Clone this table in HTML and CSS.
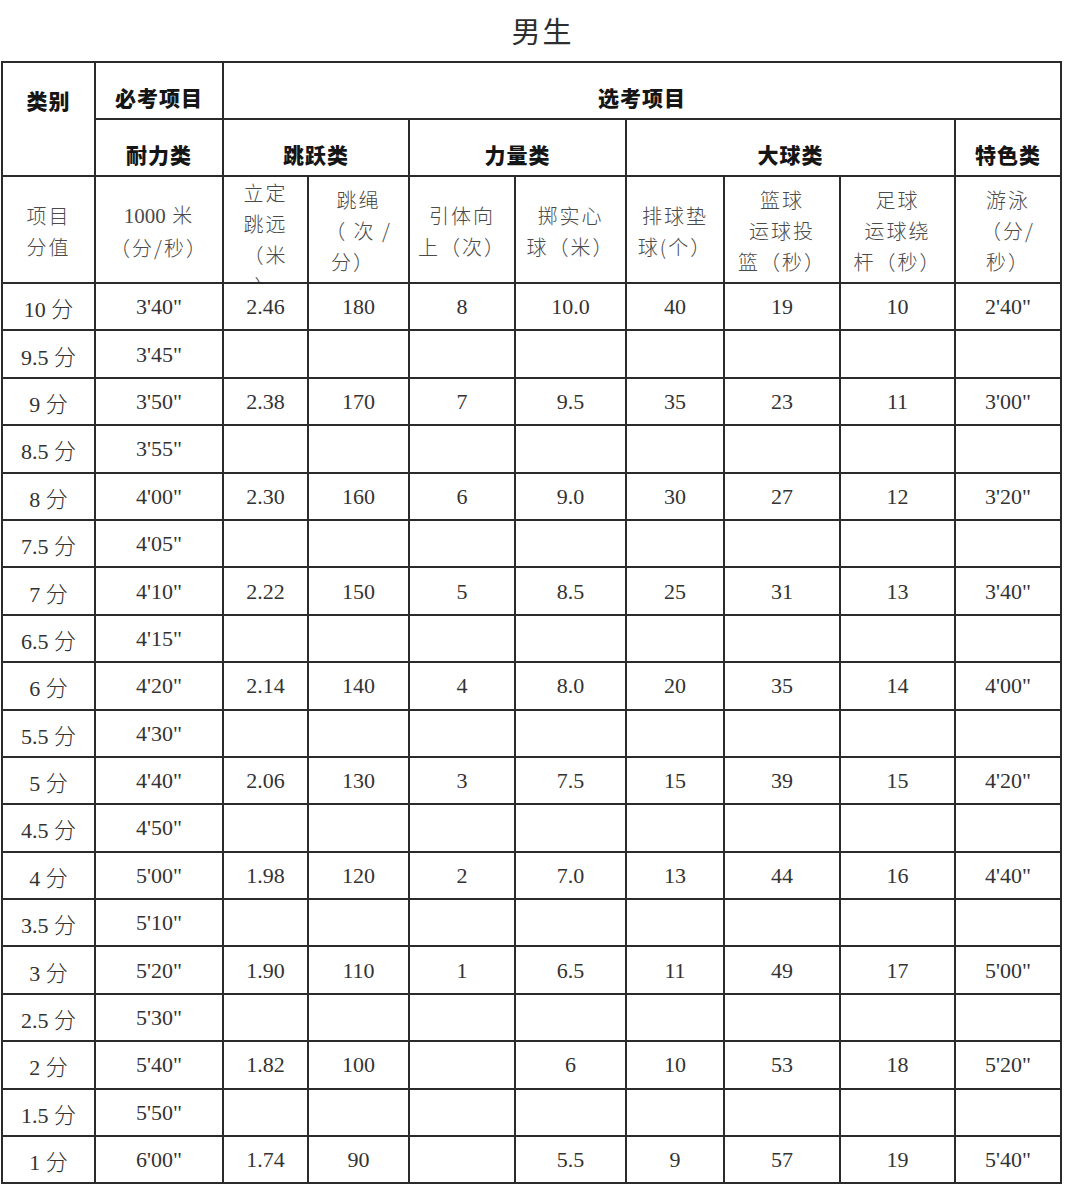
FILE: index.html
```html
<!DOCTYPE html>
<html lang="zh-CN">
<head>
<meta charset="utf-8">
<title>男生</title>
<link rel="stylesheet" href="styles.css">
</head>
<body>
<div class="title">男生</div>
<table class="score">
  <colgroup>
    <col class="w1"><col class="w2"><col class="w3"><col class="w4"><col class="w5">
    <col class="w6"><col class="w7"><col class="w8"><col class="w9"><col class="w10">
  </colgroup>
  <tr class="h1">
    <th rowspan="2" class="cat">类别</th>
    <th>必考项目</th>
    <th colspan="8">选考项目</th>
  </tr>
  <tr class="h2">
    <th>耐力类</th>
    <th colspan="2">跳跃类</th>
    <th colspan="2">力量类</th>
    <th colspan="3">大球类</th>
    <th>特色类</th>
  </tr>
  <tr class="h3">
    <td>项目<br>分值</td>
    <td><span class="num">1000</span> 米<br>（分/秒）</td>
    <td class="clip"><div class="clipbox">立定<br>跳远<br>（米<br>）</div></td>
    <td>跳绳<br>（&nbsp;次&nbsp;/<br><span class="lft">分）</span></td>
    <td>引体向<br>上（次）</td>
    <td>掷实心<br>球（米）</td>
    <td>排球垫<br>球(个）</td>
    <td>篮球<br>运球投<br>篮（秒）</td>
    <td>足球<br>运球绕<br>杆（秒）</td>
    <td>游泳<br>（分/<br>秒）</td>
  </tr>
  <tr><td>10 分</td><td>3'40"</td><td>2.46</td><td>180</td><td>8</td><td>10.0</td><td>40</td><td>19</td><td>10</td><td>2'40"</td></tr>
  <tr><td>9.5 分</td><td>3'45"</td><td></td><td></td><td></td><td></td><td></td><td></td><td></td><td></td></tr>
  <tr><td>9 分</td><td>3'50"</td><td>2.38</td><td>170</td><td>7</td><td>9.5</td><td>35</td><td>23</td><td>11</td><td>3'00"</td></tr>
  <tr><td>8.5 分</td><td>3'55"</td><td></td><td></td><td></td><td></td><td></td><td></td><td></td><td></td></tr>
  <tr><td>8 分</td><td>4'00"</td><td>2.30</td><td>160</td><td>6</td><td>9.0</td><td>30</td><td>27</td><td>12</td><td>3'20"</td></tr>
  <tr><td>7.5 分</td><td>4'05"</td><td></td><td></td><td></td><td></td><td></td><td></td><td></td><td></td></tr>
  <tr><td>7 分</td><td>4'10"</td><td>2.22</td><td>150</td><td>5</td><td>8.5</td><td>25</td><td>31</td><td>13</td><td>3'40"</td></tr>
  <tr><td>6.5 分</td><td>4'15"</td><td></td><td></td><td></td><td></td><td></td><td></td><td></td><td></td></tr>
  <tr><td>6 分</td><td>4'20"</td><td>2.14</td><td>140</td><td>4</td><td>8.0</td><td>20</td><td>35</td><td>14</td><td>4'00"</td></tr>
  <tr><td>5.5 分</td><td>4'30"</td><td></td><td></td><td></td><td></td><td></td><td></td><td></td><td></td></tr>
  <tr><td>5 分</td><td>4'40"</td><td>2.06</td><td>130</td><td>3</td><td>7.5</td><td>15</td><td>39</td><td>15</td><td>4'20"</td></tr>
  <tr><td>4.5 分</td><td>4'50"</td><td></td><td></td><td></td><td></td><td></td><td></td><td></td><td></td></tr>
  <tr><td>4 分</td><td>5'00"</td><td>1.98</td><td>120</td><td>2</td><td>7.0</td><td>13</td><td>44</td><td>16</td><td>4'40"</td></tr>
  <tr><td>3.5 分</td><td>5'10"</td><td></td><td></td><td></td><td></td><td></td><td></td><td></td><td></td></tr>
  <tr><td>3 分</td><td>5'20"</td><td>1.90</td><td>110</td><td>1</td><td>6.5</td><td>11</td><td>49</td><td>17</td><td>5'00"</td></tr>
  <tr><td>2.5 分</td><td>5'30"</td><td></td><td></td><td></td><td></td><td></td><td></td><td></td><td></td></tr>
  <tr><td>2 分</td><td>5'40"</td><td>1.82</td><td>100</td><td></td><td>6</td><td>10</td><td>53</td><td>18</td><td>5'20"</td></tr>
  <tr><td>1.5 分</td><td>5'50"</td><td></td><td></td><td></td><td></td><td></td><td></td><td></td><td></td></tr>
  <tr><td>1 分</td><td>6'00"</td><td>1.74</td><td>90</td><td></td><td>5.5</td><td>9</td><td>57</td><td>19</td><td>5'40"</td></tr>
</table>
</body>
</html>
```

FILE: styles.css
```css
html, body {
  margin: 0;
  padding: 0;
  background: #ffffff;
}

body {
  font-family: "Liberation Serif", "Noto Sans CJK SC", serif;
  color: #333333;
}

.title {
  height: 61px;
  box-sizing: border-box;
  padding-left: 20px;
  text-align: center;
  font-family: "Noto Sans CJK SC", sans-serif;
  font-weight: 400;
  font-size: 29px;
  line-height: 60px;
  letter-spacing: 2px;
  color: #2e2e2e;
}

.score {
  margin-left: 1px;
  width: 1061px;
  border-collapse: collapse;
  table-layout: fixed;
}

.w1 { width: 93px; }
.w2 { width: 128px; }
.w3 { width: 85px; }
.w4 { width: 101px; }
.w5 { width: 106px; }
.w6 { width: 111px; }
.w7 { width: 98px; }
.w8 { width: 116px; }
.w9 { width: 115px; }
.w10 { width: 106px; }

.score th,
.score td {
  border: 2px solid #2b2b2b;
  padding: 0;
  text-align: center;
  vertical-align: middle;
}

.score tr {
  height: 47.4px;
}

.score tr.h1,
.score tr.h2 {
  height: 57px;
}

.score tr.h3 {
  height: 107px;
}

.score td {
  font-size: 22px;
  font-weight: 300;
  padding-top: 1px;
}

.score th {
  font-family: "Noto Sans CJK SC", sans-serif;
  font-weight: 900;
  font-size: 21px;
  color: #151515;
  padding-top: 12px;
  letter-spacing: 1px;
}

.score th.cat {
  vertical-align: top;
  padding-top: 22px;
}

.score .h3 td {
  font-family: "Noto Sans CJK SC", sans-serif;
  font-weight: 300;
  font-size: 20px;
  line-height: 31px;
  letter-spacing: 2px;
  color: #4a4a4a;
  padding-top: 2px;
}

.h3 .num {
  font-family: "Liberation Serif", serif;
  font-size: 21px;
  letter-spacing: 0;
}

.score .h3 td.clip {
  vertical-align: top;
  padding-top: 0;
}

.clipbox {
  height: 105px;
  overflow: hidden;
}

.lft {
  display: block;
  text-align: left;
  padding-left: 22px;
}
```
